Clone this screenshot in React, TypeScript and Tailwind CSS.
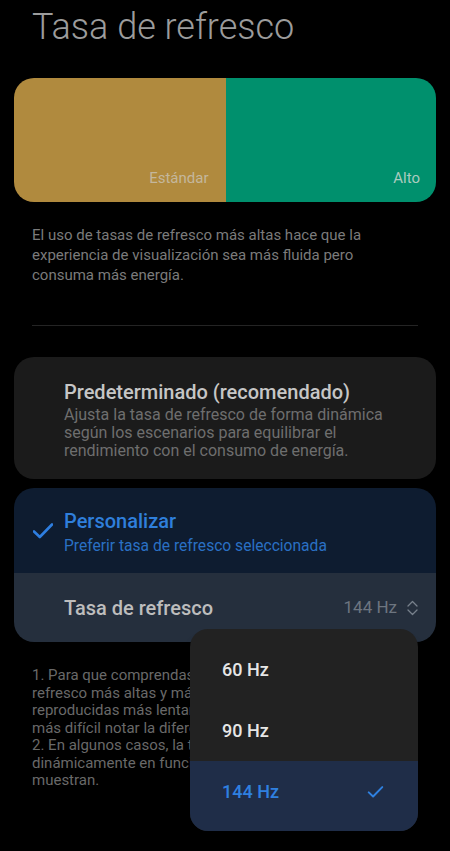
const footnote = [
  "1. Para que comprendas mejor, las tasas de",
  "refresco más altas y más bajas se muestran",
  "reproducidas más lentamente. En la práctica, es",
  "más difícil notar la diferencia.",
  "2. En algunos casos, la tasa de refresco cambia",
  "dinámicamente en función del contenido que se",
  "muestran.",
];

const rates = ["60 Hz", "90 Hz", "144 Hz"];

const Check = ({ className }: { className?: string }) => (
  <svg viewBox="0 0 20 16" className={className} fill="none">
    <path
      d="M1 8.5 L6.8 14 L19 1.5"
      stroke="currentColor"
      strokeWidth="2.6"
      strokeLinecap="round"
      strokeLinejoin="round"
    />
  </svg>
);

export default function App() {
  const selected = "144 Hz";

  return (
    <div className="relative h-[851px] overflow-hidden bg-black font-['Roboto',sans-serif]">
      <h1 className="pl-8 pt-[5px] text-[36px] leading-[44px] font-light text-[#9c9c9c]">
        Tasa de refresco
      </h1>

      <div className="mx-[14px] mt-[29px] flex h-[124px] overflow-hidden rounded-[20px]">
        <div className="flex flex-1 items-end justify-end bg-[#b08a3e] pb-[14px] pr-[17px]">
          <span className="text-[15px] leading-[20px] text-[#c4b79c]">Estándar</span>
        </div>
        <div className="flex flex-1 items-end justify-end bg-[#00906d] pb-[14px] pr-4">
          <span className="text-[15px] leading-[20px] text-[#abcbbf]">Alto</span>
        </div>
      </div>

      <p className="mt-[23px] pl-8 pr-[50px] text-[15px] leading-[20px] text-[#7b7b7b]">
        El uso de tasas de refresco más altas hace que la experiencia de visualización sea más
        fluida pero consuma más energía.
      </p>

      <div className="mx-8 mt-[40px] h-px bg-[#242424]" />

      <div className="mx-[14px] mt-[31px] rounded-[20px] bg-[#1b1b1b] pb-[19px] pl-[50px] pr-[40px] pt-[23px]">
        <div className="text-[20px] leading-[24px] font-medium text-[#c6c6c6]">
          Predeterminado (recomendado)
        </div>
        <p className="mt-[2px] text-[16px] leading-[18px] text-[#6e6e6e]">
          Ajusta la tasa de refresco de forma dinámica según los escenarios para equilibrar el
          rendimiento con el consumo de energía.
        </p>
      </div>

      <div className="mx-[14px] mt-[9px] overflow-hidden rounded-[20px]">
        <div className="flex h-[85px] bg-[#0e1c30]">
          <div className="flex w-[50px] items-center pl-[19px]">
            <Check className="h-4 w-5 text-[#2e7ee0]" />
          </div>
          <div className="pt-[21px]">
            <div className="text-[20px] leading-[24px] font-medium text-[#2f7fdb]">
              Personalizar
            </div>
            <div className="mt-[3px] text-[15.6px] leading-[20px] text-[#2a70c4]">
              Preferir tasa de refresco seleccionada
            </div>
          </div>
        </div>
        <div className="flex h-[69px] items-center justify-between bg-[#252f3d] pl-[50px] pr-[18px]">
          <span className="text-[20px] font-medium text-[#bdbdbd]">Tasa de refresco</span>
          <div className="flex items-center gap-[10px]">
            <span className="text-[17px] text-[#6d7580]">{selected}</span>
            <svg viewBox="0 0 11 16" className="h-4 w-[11px] text-[#77808b]" fill="none">
              <path
                d="M1 6 L5.5 1.5 L10 6 M1 10 L5.5 14.5 L10 10"
                stroke="currentColor"
                strokeWidth="1.3"
                strokeLinecap="round"
                strokeLinejoin="round"
              />
            </svg>
          </div>
        </div>
      </div>

      <div className="mt-[25px] overflow-hidden pl-8 text-[15px] leading-[17.5px] text-[#696969]">
        {footnote.map((line) => (
          <div key={line} className="whitespace-nowrap">
            {line}
          </div>
        ))}
      </div>

      <div className="absolute left-[190px] top-[629px] w-[228px] overflow-hidden rounded-[18px] bg-[#222222] pt-[10px] shadow-lg">
        {rates.map((rate) =>
          rate === selected ? (
            <div
              key={rate}
              className="flex h-[70px] items-center justify-between bg-[#1f2d48] pb-[9px] pl-8 pr-[34px]"
            >
              <span className="text-[18px] font-medium text-[#2f80e0]">{rate}</span>
              <Check className="h-[12px] w-[17px] text-[#2f80e0]" />
            </div>
          ) : (
            <div key={rate} className="flex h-[61px] items-center pl-8">
              <span className="text-[18px] font-medium text-[#e6e6e6]">{rate}</span>
            </div>
          )
        )}
      </div>
    </div>
  );
}
